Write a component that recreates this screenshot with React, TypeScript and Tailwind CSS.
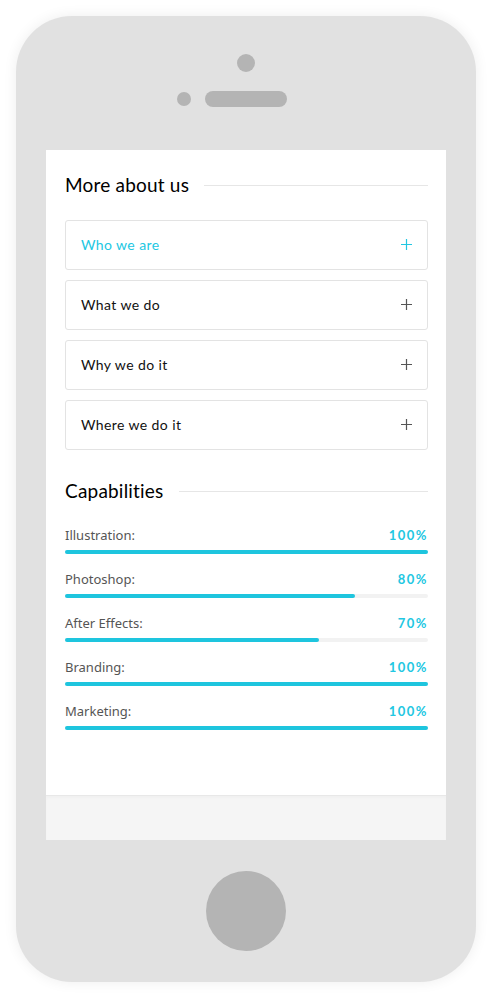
const ITEMS = ['Who we are', 'What we do', 'Why we do it', 'Where we do it'];

const SKILLS = [
  { name: 'Illustration', value: 100 },
  { name: 'Photoshop', value: 80 },
  { name: 'After Effects', value: 70 },
  { name: 'Branding', value: 100 },
  { name: 'Marketing', value: 100 },
];

function Heading({ children }: { children: string }) {
  return (
    <div className="flex h-[22px] items-center gap-[15px]">
      <h2 className="text-[19px] leading-[22px] tracking-[0.2px] text-black">{children}</h2>
      <div className="h-px flex-1 bg-[#e6e6e6]" />
    </div>
  );
}

export default function App() {
  return (
    <div
      className="min-h-[998px] bg-white p-4"
      style={{ fontFamily: 'Lato, "Open Sans", sans-serif' }}
    >
      <div className="flex h-[966px] w-[460px] flex-col items-center rounded-[56px] bg-[#e1e1e1] shadow-[0_0_14px_rgba(0,0,0,0.07)]">
        {/* top: camera + speaker */}
        <div className="mt-[38px] h-[18px] w-[18px] rounded-full bg-[#b4b4b4]" />
        <div className="mt-[19px] flex items-center gap-[14px] pr-[28px]">
          <div className="h-[14px] w-[14px] rounded-full bg-[#b4b4b4]" />
          <div className="h-4 w-[82px] rounded-full bg-[#b4b4b4]" />
        </div>

        {/* screen */}
        <div className="mt-[43px] flex h-[690px] w-[400px] flex-col bg-white">
          <div className="flex-1 px-[18px] pl-[19px] pt-6">
            <Heading>More about us</Heading>
            <div className="mt-6 flex flex-col gap-[10px]">
              {ITEMS.map((item, i) => (
                <div
                  key={item}
                  className={`flex h-[50px] items-center justify-between rounded-[3px] border border-[#e3e3e3] pb-[2px] pl-[15px] pr-[15px] text-[14px] tracking-[0.4px] ${
                    i === 0 ? 'text-[#22c7e2]' : 'text-[#111]'
                  }`}
                >
                  <span>{item}</span>
                  <svg width="11" height="11" viewBox="0 0 11 11">
                    <path
                      d="M5.5 0v11M0 5.5h11"
                      stroke={i === 0 ? '#22c7e2' : '#555'}
                      strokeWidth="1.2"
                    />
                  </svg>
                </div>
              ))}
            </div>

            <div className="mt-[30px]">
              <Heading>Capabilities</Heading>
            </div>
            <div className="mt-[25px] flex flex-col gap-[17px]">
              {SKILLS.map((s) => (
                <div key={s.name}>
                  <div className="flex h-[18px] items-center justify-between text-[13px]">
                    <span
                      className="text-[#555]"
                      style={{ fontFamily: '"Noto Sans", Lato, sans-serif' }}
                    >
                      {s.name}:
                    </span>
                    <span className="font-bold tracking-[1.5px] text-[#22c7e2]">
                      {s.value}%
                    </span>
                  </div>
                  <div className="mt-[5px] h-1 rounded-full bg-[#f2f2f2]">
                    <div
                      className="h-1 rounded-full bg-[#1ec5de]"
                      style={{ width: `${s.value}%` }}
                    />
                  </div>
                </div>
              ))}
            </div>
          </div>
          <div className="h-[45px] border-t border-[#e8e8e8] bg-[#f5f5f5] shadow-[inset_0_2px_3px_rgba(0,0,0,0.02)]" />
        </div>

        {/* home button */}
        <div className="mt-[31px] h-20 w-20 rounded-full bg-[#b4b4b4]" />
      </div>
    </div>
  );
}
